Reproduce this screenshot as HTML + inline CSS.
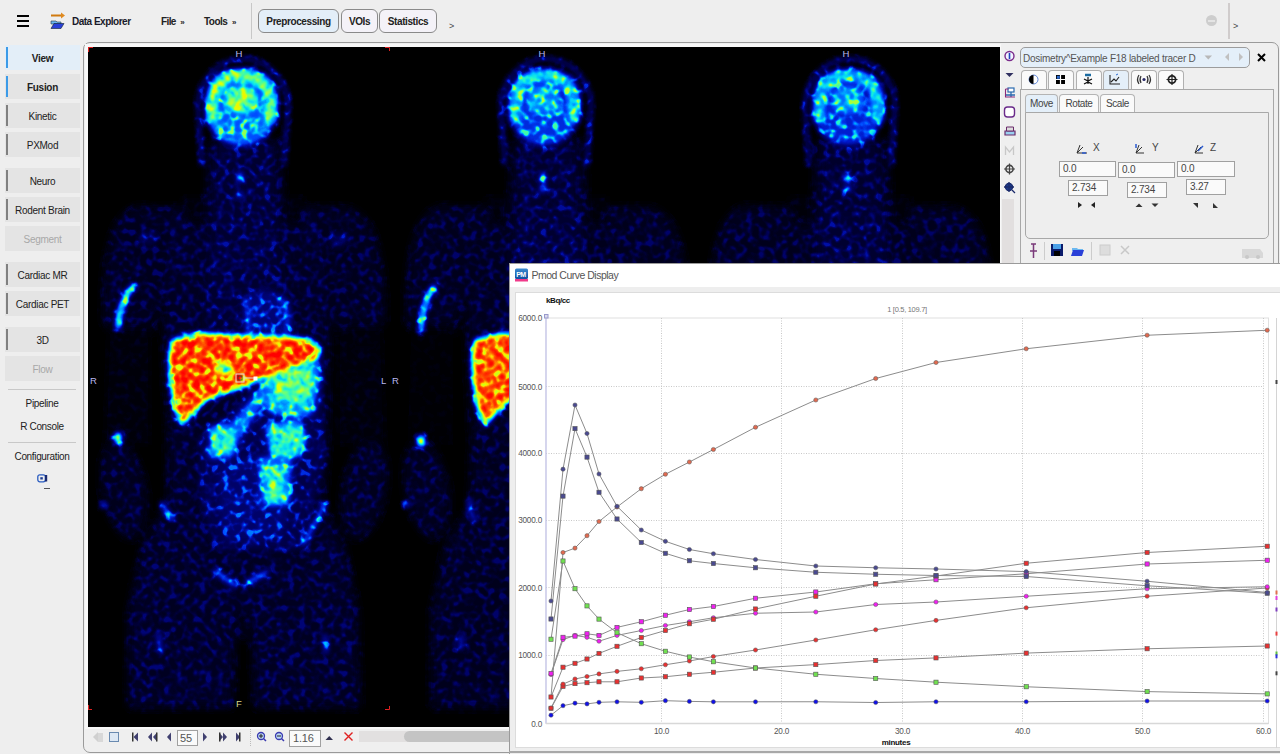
<!DOCTYPE html>
<html><head><meta charset="utf-8">
<style>
*{box-sizing:border-box;margin:0;padding:0}
html,body{width:1280px;height:754px;overflow:hidden;background:#eeeeee;font-family:"Liberation Sans",sans-serif;color:#222;position:relative}
.a{position:absolute}
.t{position:absolute;white-space:nowrap;font-size:10px;letter-spacing:-0.35px;line-height:12px}
.b{font-weight:bold}
.sb{position:absolute;left:5px;width:75px;height:25px;background:#e4e4e4;text-align:center;font-size:10px;line-height:27px;letter-spacing:-0.3px;color:#222}
.sb:before{content:"";position:absolute;left:1px;top:2px;width:2px;height:21px;background:#808080}
.sb.blue:before{background:#3c9be8}
.sb.dis{color:#a8a8a8}
.sb.dis:before{display:none}
.tbtn{position:absolute;top:9px;height:24px;border:1px solid #8a8a8a;border-radius:6px;background:#f4f2f8;font-weight:bold;font-size:10px;letter-spacing:-0.4px;text-align:center;line-height:24px;color:#222}
.tab{position:absolute;top:70px;width:26px;height:19px;border:1px solid #b0b0b0;border-bottom:none;border-radius:4px 4px 0 0;background:#fafafa}
.stab{position:absolute;top:94px;height:19px;border:1px solid #b4b4b4;border-bottom:none;border-radius:4px 4px 0 0;background:#fafafa;font-size:10px;letter-spacing:-0.4px;line-height:18px;text-align:center;color:#444}
.fld{position:absolute;height:16px;border:1px solid #a0a0a0;background:#fafafa;font-size:10px;line-height:14px;padding-left:3px;color:#444;letter-spacing:-0.2px}
</style></head><body>
<!-- toolbar -->
<div class="a" style="left:17px;top:15px;width:12px;height:2px;background:#000"></div>
<div class="a" style="left:17px;top:20px;width:12px;height:2px;background:#000"></div>
<div class="a" style="left:17px;top:25px;width:12px;height:2px;background:#000"></div>
<svg class="a" style="left:50px;top:12px" width="16" height="18" viewBox="0 0 16 18">
<path d="M1 3.5h11" stroke="#d07a10" stroke-width="2"/><path d="M11 0.5l4 3l-4 3z" fill="#e08a20"/>
<path d="M1 9h5l1 1h4v2H1z" fill="#6cb8f0" stroke="#234" stroke-width="0.6"/>
<path d="M1 16.5l3-5h10l-3 5z" fill="#2a40d8" stroke="#123" stroke-width="0.6"/>
</svg>
<div class="t b" style="left:72px;top:16px;letter-spacing:-0.5px;color:#1a1a2a">Data Explorer</div>
<div class="t b" style="left:161px;top:16px;letter-spacing:-0.6px">File &nbsp;<span style="font-size:8px">»</span></div>
<div class="t b" style="left:204px;top:16px;letter-spacing:-0.5px">Tools &nbsp;<span style="font-size:8px">»</span></div>
<div class="a" style="left:251px;top:3px;width:1px;height:36px;background:#c8c8c8"></div>
<div class="tbtn" style="left:258px;width:81px;background:#e3eef8">Preprocessing</div>
<div class="tbtn" style="left:341px;width:37px">VOIs</div>
<div class="tbtn" style="left:379px;width:58px">Statistics</div>
<div class="t" style="left:449px;top:20px;font-size:9px;color:#444">&gt;</div>
<div class="a" style="left:1206px;top:15px;width:11px;height:11px;border-radius:50%;background:#cdcdcd"></div>
<div class="a" style="left:1208px;top:20px;width:7px;height:1.5px;background:#e4e4e4"></div>
<div class="a" style="left:1228px;top:3px;width:2px;height:36px;background:#d0cccc"></div>
<div class="t" style="left:1233px;top:20px;font-size:9px;color:#444">&gt;</div>

<!-- sidebar -->
<div class="sb blue b" style="top:45px;background:#e3eef8">View</div>
<div class="sb blue b" style="top:74px">Fusion</div>
<div class="sb" style="top:103px">Kinetic</div>
<div class="sb" style="top:132px">PXMod</div>
<div class="sb" style="top:168px">Neuro</div>
<div class="sb" style="top:197px">Rodent Brain</div>
<div class="sb dis" style="top:226px">Segment</div>
<div class="sb" style="top:262px">Cardiac MR</div>
<div class="sb" style="top:291px">Cardiac PET</div>
<div class="sb" style="top:327px">3D</div>
<div class="sb dis" style="top:356px">Flow</div>
<div class="a" style="left:8px;top:389px;width:68px;height:1px;background:#c8c8c8"></div>
<div class="t" style="left:0;width:84px;text-align:center;top:398px">Pipeline</div>
<div class="t" style="left:0;width:84px;text-align:center;top:421px">R Console</div>
<div class="a" style="left:8px;top:442px;width:68px;height:1px;background:#c8c8c8"></div>
<div class="t" style="left:0;width:84px;text-align:center;top:451px">Configuration</div>
<svg class="a" style="left:37px;top:474px" width="14" height="18" viewBox="0 0 14 18">
<rect x="0.8" y="0.8" width="7.5" height="7" rx="2" fill="none" stroke="#2a5cc0" stroke-width="1.3"/>
<rect x="3.3" y="3.2" width="2.5" height="2.3" fill="#1a3a90"/>
<rect x="8" y="1" width="2.2" height="6.5" fill="#1a2a70"/>
<rect x="7" y="14" width="6" height="1" fill="#555"/>
</svg>
<!-- main panel -->
<div class="a" style="left:83px;top:42px;width:1196px;height:711px;border:1px solid #9a9a9a;border-radius:7px;background:#efefef"></div>
<div class="a" style="left:85px;top:44px;width:916px;height:685px;background:#f8f8f8"></div>
<div class="a" style="left:88px;top:47px;width:912px;height:680px;background:#000"></div>
<!-- right icon column -->
<svg class="a" style="left:1000px;top:47px" width="20" height="160" viewBox="0 0 20 160">
<ellipse cx="9.5" cy="9" rx="4.5" ry="4.5" fill="#f4f4ff" stroke="#7a2a8a" stroke-width="1.4"/>
<rect x="8.7" y="6" width="1.6" height="6" fill="#2040c0"/>
<path d="M5.5 26h8l-4 4z" fill="#303060"/>
<rect x="8" y="41" width="6" height="4" fill="#fff" stroke="#2a6ab0" stroke-width="1.2"/>
<path d="M11 45v3M6 48h9M11 48v2" stroke="#2a6ab0" stroke-width="1.3" fill="none"/>
<path d="M5.5 42h3M5.5 42v8M5 50h10" stroke="#8a2a7a" stroke-width="1.1" fill="none"/>
<rect x="4.5" y="60" width="10" height="10" rx="3" fill="#fff" stroke="#6a2a8a" stroke-width="1.4"/>
<path d="M5 84h10v4H5z" fill="#9ad0f0" stroke="#6a2a6a" stroke-width="1.2"/><path d="M6.5 80h7v4h-7z" fill="#ddd" stroke="#6a2a6a" stroke-width="1"/>
<path d="M5.5 108v-8l4 5l4-5v8" stroke="#c8c8c8" stroke-width="1.3" fill="none"/>
<circle cx="9.5" cy="122" r="3.6" fill="none" stroke="#444" stroke-width="1.6"/><path d="M9.5 116.5v11M4 122h11" stroke="#444" stroke-width="1.2"/>
<circle cx="9" cy="140" r="3.6" fill="#1a3a8a" stroke="#1a2a6a" stroke-width="1.2"/><path d="M9 135v10M4 140h10M12 143l3 3" stroke="#1a2a6a" stroke-width="1.3"/>
</svg>
<div class="a" style="left:1002px;top:199px;width:12px;height:64px;background:#e2dfdf"></div>
<div class="a" style="left:1020px;top:89px;width:1px;height:174px;background:#a8a8a8"></div>
<div class="a" style="left:1273px;top:89px;width:1px;height:174px;background:#a8a8a8"></div>
<div class="a" style="left:1020px;top:89px;width:254px;height:1px;background:#a8a8a8"></div>
<!-- dropdown -->
<div class="a" style="left:1020px;top:47px;width:230px;height:21px;border:1px solid #9c9c9c;border-radius:5px;background:#e4eff9"></div>
<div class="t" style="left:1023px;top:53px;color:#555;letter-spacing:-0.25px;width:174px;overflow:hidden">Dosimetry^Example F18 labeled tracer D</div>
<svg class="a" style="left:1200px;top:50px" width="50" height="14" viewBox="0 0 50 14">
<path d="M4.5 5.5h7.5l-3.75 4z" fill="#b8b8b8"/>
<path d="M29 3v8l-4-4z" fill="#c0c0c0"/>
<path d="M39 3v8l4-4z" fill="#c0c0c0"/>
</svg>
<svg class="a" style="left:1256px;top:52px" width="11" height="11" viewBox="0 0 11 11"><path d="M2 2l7 7M9 2l-7 7" stroke="#000" stroke-width="2"/></svg>
<!-- icon tabs -->
<div class="tab" style="left:1021px"></div>
<div class="tab" style="left:1048px"></div>
<div class="tab" style="left:1076px"></div>
<div class="tab" style="left:1103px;background:#e4eff9"></div>
<div class="tab" style="left:1131px"></div>
<div class="tab" style="left:1158px"></div>
<svg class="a" style="left:1021px;top:70px" width="170" height="19" viewBox="0 0 170 19">
<circle cx="12.5" cy="9.5" r="4.5" fill="#fff" stroke="#3a6ad0" stroke-width="0.8"/><path d="M12.5 5a4.5 4.5 0 0 0 0 9z" fill="#000"/>
<rect x="35" y="5" width="9" height="9" fill="#000"/><path d="M39.5 5v9M35 9.5h9" stroke="#fff" stroke-width="1.2"/><rect x="35.8" y="5.8" width="3" height="3" fill="#2a6ad0"/>
<path d="M64 5h6" stroke="#1a6aa0" stroke-width="2.5"/><path d="M67 7v7M63 9l4 2l4-2M63 14l4-2l4 2" stroke="#111" stroke-width="1.2" fill="none"/>
<path d="M89 5v9h10M90 12l3-3l2 2l3-4" stroke="#222" stroke-width="1.1" fill="none"/><path d="M95 5l2-1" stroke="#2a6ad0" stroke-width="1"/>
<path d="M120 6q-2 3.5 0 7M126 6q2 3.5 0 7M118 5q-3 4.5 0 9M128 5q3 4.5 0 9" stroke="#333" stroke-width="1.2" fill="none"/><circle cx="123" cy="9.5" r="1.6" fill="#2a2a6a"/>
<circle cx="151" cy="9.5" r="3.6" fill="none" stroke="#222" stroke-width="1.8"/><path d="M151 4v11M145.5 9.5h11" stroke="#222" stroke-width="1.2"/>
</svg>
<!-- sub tabs -->
<div class="stab" style="left:1025px;width:33px;background:#e4eff9">Move</div>
<div class="stab" style="left:1059px;width:40px">Rotate</div>
<div class="stab" style="left:1100px;width:35px">Scale</div>
<div class="a" style="left:1025px;top:112px;width:244px;height:127px;border:1px solid #a8a8a8;border-radius:0 0 5px 5px;background:#eeeeee"></div>
<!-- xyz -->
<svg class="a" style="left:1076px;top:141px" width="150" height="72" viewBox="0 0 150 72">
<path d="M4 4l-3 8h10M1 12l6-6" stroke="#333" stroke-width="1" fill="none"/><path d="M6 12h4" stroke="#2a5ad0" stroke-width="1.5"/>
<path d="M63 4l-3 8h8M60 12l6-6" stroke="#333" stroke-width="1" fill="none"/><path d="M60 3v4" stroke="#2a5ad0" stroke-width="1.5"/>
<path d="M122 4l-3 8h8M119 12l6-6" stroke="#333" stroke-width="1" fill="none"/><path d="M122 10l5-5" stroke="#2a5ad0" stroke-width="1.5"/>
<path d="M2 61v6l4-3z" fill="#222"/><path d="M19 61v6l-4-3z" fill="#222"/>
<path d="M59.5 66h7l-3.5-3.5z" fill="#333"/><path d="M75.5 62.5h7l-3.5 3.5z" fill="#333"/>
<path d="M117 62h5v5zM117.5 62.5l4 4" fill="#333"/><path d="M137 62v5h5z" fill="#333"/>
</svg>
<div class="t" style="left:1093px;top:142px;color:#444">X</div>
<div class="t" style="left:1152px;top:142px;color:#444">Y</div>
<div class="t" style="left:1210px;top:142px;color:#444">Z</div>
<div class="fld" style="left:1059px;top:161px;width:57px">0.0</div>
<div class="fld" style="left:1118px;top:162px;width:57px">0.0</div>
<div class="fld" style="left:1177px;top:161px;width:58px">0.0</div>
<div class="fld" style="left:1068px;top:180px;width:40px">2.734</div>
<div class="fld" style="left:1127px;top:182px;width:40px">2.734</div>
<div class="fld" style="left:1186px;top:179px;width:40px">3.27</div>
<!-- bottom icons of right panel -->
<svg class="a" style="left:1024px;top:241px" width="250" height="20" viewBox="0 0 250 20">
<path d="M7 3h5M9.5 3v7M6 10h7M9.5 10v7" stroke="#7a3a7a" stroke-width="1.5"/>
<rect x="20" y="1" width="1" height="18" fill="#ccc"/>
<rect x="27" y="3" width="12" height="12" fill="#0a1a6a"/><rect x="29" y="3" width="8" height="5" fill="#4aa0e8"/><rect x="30" y="10" width="6" height="5" fill="#000"/>
<path d="M48 7h5l1 1h5v2H48z" fill="#6cb8f0"/><path d="M47 15l2-6h11l-2 6z" fill="#2a40d8"/>
<rect x="67" y="1" width="1" height="18" fill="#ccc"/>
<rect x="76" y="4" width="10" height="10" fill="#ddd" stroke="#ccc"/>
<path d="M97 5l8 8M105 5l-8 8" stroke="#c8c8c8" stroke-width="1.5"/>
<path d="M218 8h18l3 4v5h-21z" fill="#d8d8d8"/><circle cx="223" cy="16" r="2" fill="#c8c8c8"/><circle cx="234" cy="16" r="2" fill="#c8c8c8"/>
</svg>
<!-- bottom toolbar -->
<svg class="a" style="left:88px;top:728px" width="425" height="20" viewBox="0 0 425 20">
<path d="M5 9l5-5v10z" fill="#d0d0d0"/><rect x="10" y="5" width="5" height="9" fill="#d8d8d8"/>
<rect x="21.5" y="4.5" width="9" height="9" fill="#dde8f4" stroke="#6a8ab0"/>
<rect x="44" y="4.5" width="1.5" height="9" fill="#333"/><path d="M50 4.5v9l-4.5-4.5z" fill="#404070"/>
<path d="M64 4.5v9l-4-4.5zM69 4.5v9l-4-4.5z" fill="#404070"/><rect x="68" y="4.5" width="1.5" height="9" fill="#333"/>
<path d="M83 4.5v9l-4-4.5z" fill="#404070"/>
<path d="M115 4.5v9l4-4.5z" fill="#404070"/>
<path d="M131 4.5v9l4-4.5zM135 4.5v9l4-4.5z" fill="#404070"/><rect x="131" y="4.5" width="1.5" height="9" fill="#333"/>
<path d="M148 4.5v9l4-4.5z" fill="#404070"/><rect x="151" y="4.5" width="1.5" height="9" fill="#333"/>
<path d="M162.5 1v18" stroke="#bbb" stroke-dasharray="1 1"/>
<circle cx="173" cy="8" r="3.5" fill="#bcd8f4" stroke="#3a3ab0" stroke-width="1.3"/><path d="M171 8h4M173 6v4" stroke="#222" stroke-width="1"/><path d="M175.5 10.5l2.5 2.5" stroke="#3a3ab0" stroke-width="1.5"/>
<circle cx="191" cy="8" r="3.5" fill="#bcd8f4" stroke="#3a3ab0" stroke-width="1.3"/><path d="M189 8h4" stroke="#222" stroke-width="1"/><path d="M193.5 10.5l2.5 2.5" stroke="#3a3ab0" stroke-width="1.5"/>
<path d="M237.5 12h7.5l-3.75-4z" fill="#303050"/>
<path d="M256.5 4.5l8 8M264.5 4.5l-8 8" stroke="#e02020" stroke-width="1.4"/>
</svg>
<div class="fld" style="left:177px;top:730px;width:21px;height:16px;font-size:11px;color:#555;padding-left:2px">55</div>
<div class="fld" style="left:289px;top:730px;width:32px;height:17px;font-size:11px;color:#555;padding-left:3px">1.16</div>
<div class="a" style="left:359px;top:731px;width:150px;height:11px;background:#e2e0e0"></div>
<div class="a" style="left:404px;top:731px;width:105px;height:11px;background:#c4c4c4;border-radius:6px 0 0 6px"></div>
<svg class="a" style="left:88px;top:47px" width="912" height="680" viewBox="88 47 912 680">
<defs><filter id="soft" x="-20%" y="-20%" width="140%" height="140%" color-interpolation-filters="sRGB"><feGaussianBlur stdDeviation="3.5"/></filter>
<filter id="soft2" x="-20%" y="-20%" width="140%" height="140%" color-interpolation-filters="sRGB"><feGaussianBlur stdDeviation="2"/></filter>
<filter id="pet" x="88" y="47" width="912" height="680" filterUnits="userSpaceOnUse" color-interpolation-filters="sRGB">
<feGaussianBlur in="SourceGraphic" stdDeviation="2.5" result="bl"/>
<feComponentTransfer in="bl" result="amp"><feFuncR type="table" tableValues="0 0.14 0.19 0.23 0.26 0.28 0.28 0.26 0.22 0.18 0.15 0.13 0.12 0.11 0.08 0.06 0.05 0.05 0.05 0.05 0.05"/><feFuncG type="table" tableValues="0 0.14 0.19 0.23 0.26 0.28 0.28 0.26 0.22 0.18 0.15 0.13 0.12 0.11 0.08 0.06 0.05 0.05 0.05 0.05 0.05"/><feFuncB type="table" tableValues="0 0.14 0.19 0.23 0.26 0.28 0.28 0.26 0.22 0.18 0.15 0.13 0.12 0.11 0.08 0.06 0.05 0.05 0.05 0.05 0.05"/><feFuncA type="linear" slope="0" intercept="1"/></feComponentTransfer>
<feComponentTransfer in="bl" result="ampB"><feFuncR type="table" tableValues="0 0 0 0 0 0 0.02 0.04 0.06 0.08 0.1 0.12 0.14 0.16 0.18 0.2 0.22 0.22 0.22 0.22 0.22"/><feFuncG type="table" tableValues="0 0 0 0 0 0 0.02 0.04 0.06 0.08 0.1 0.12 0.14 0.16 0.18 0.2 0.22 0.22 0.22 0.22 0.22"/><feFuncB type="table" tableValues="0 0 0 0 0 0 0.02 0.04 0.06 0.08 0.1 0.12 0.14 0.16 0.18 0.2 0.22 0.22 0.22 0.22 0.22"/><feFuncA type="linear" slope="0" intercept="1"/></feComponentTransfer>
<feTurbulence type="fractalNoise" baseFrequency="0.17" numOctaves="2" seed="7" result="nz0"/>
<feGaussianBlur in="nz0" stdDeviation="1" result="nz"/>
<feColorMatrix in="nz" type="matrix" values="3.2 0 0 0 -1.1  3.2 0 0 0 -1.1  3.2 0 0 0 -1.1  0 0 0 0 1" result="gn1"/>
<feComponentTransfer in="gn1" result="gn"><feFuncR type="gamma" amplitude="1" exponent="3" offset="0"/><feFuncG type="gamma" amplitude="1" exponent="3" offset="0"/><feFuncB type="gamma" amplitude="1" exponent="3" offset="0"/><feFuncA type="linear" slope="0" intercept="1"/></feComponentTransfer>
<feComponentTransfer in="gn1" result="inv"><feFuncR type="linear" slope="-1" intercept="1"/><feFuncG type="linear" slope="-1" intercept="1"/><feFuncB type="linear" slope="-1" intercept="1"/><feFuncA type="linear" slope="0" intercept="1"/></feComponentTransfer>
<feComponentTransfer in="inv" result="gm"><feFuncR type="gamma" amplitude="1" exponent="3" offset="0"/><feFuncG type="gamma" amplitude="1" exponent="3" offset="0"/><feFuncB type="gamma" amplitude="1" exponent="3" offset="0"/><feFuncA type="linear" slope="0" intercept="1"/></feComponentTransfer>
<feComposite in="amp" in2="gn" operator="arithmetic" k1="1" k2="0" k3="0" k4="0" result="P"/>
<feComposite in="ampB" in2="gm" operator="arithmetic" k1="1" k2="0" k3="0" k4="0" result="P2"/>
<feComposite in="bl" in2="P" operator="arithmetic" k1="0" k2="0.9" k3="1" k4="0" result="Q"/>
<feComponentTransfer in="Q" result="Qi"><feFuncR type="linear" slope="-1" intercept="1"/><feFuncG type="linear" slope="-1" intercept="1"/><feFuncB type="linear" slope="-1" intercept="1"/><feFuncA type="linear" slope="0" intercept="1"/></feComponentTransfer>
<feComposite in="Qi" in2="P2" operator="arithmetic" k1="0" k2="1" k3="1" k4="0" result="S"/>
<feComponentTransfer in="S" result="md"><feFuncR type="linear" slope="-1" intercept="1"/><feFuncG type="linear" slope="-1" intercept="1"/><feFuncB type="linear" slope="-1" intercept="1"/><feFuncA type="linear" slope="0" intercept="1"/></feComponentTransfer>
<feComponentTransfer in="md"><feFuncR type="table" tableValues="0 0 0 0 0 0 0 0.1 0.35 0.65 0.9 1 1 1 1 1 1"/><feFuncG type="table" tableValues="0 0 0.02 0.1 0.3 0.55 0.8 0.95 1 1 1 0.85 0.55 0.25 0 0 0"/><feFuncB type="table" tableValues="0 0.3 0.5 0.8 1 1 1 0.85 0.55 0.25 0 0 0 0 0 0 0"/><feFuncA type="linear" slope="0" intercept="1"/></feComponentTransfer>
</filter></defs>
<g filter="url(#pet)"><rect x="88" y="47" width="912" height="680" fill="#000"/>
<g filter="url(#soft)">
<polygon points="208,140 281,140 284,212 206,212" fill="rgb(8,8,8)"/>
<polygon points="150,207 335,207 330,300 328,440 324,505 345,545 358,611 360,708 128,708 128,611 142,545 166,505 168,440 162,300" fill="rgb(8,8,8)"/>
<path d="M103 320 Q101 209 140 206 L172 208 L160 300 L152 335 L110 340 Z" fill="rgb(7,7,7)"/>
<path d="M316 208 L345 207 Q386 211 385 320 L378 340 L336 335 L330 300 Z" fill="rgb(7,7,7)"/>
<polygon points="108,325 150,325 150,445 104,445" fill="rgb(2,2,2)"/>
<polygon points="338,325 382,325 386,445 338,445" fill="rgb(2,2,2)"/>
<ellipse cx="124" cy="490" rx="22" ry="50" transform="rotate(-10 124 490)" fill="rgb(7,7,7)"/>
<ellipse cx="364" cy="490" rx="22" ry="50" transform="rotate(10 364 490)" fill="rgb(7,7,7)"/>
<polygon points="180,196 206,196 206,222 190,226" fill="rgb(2,2,2)"/>
<polygon points="284,196 306,196 300,226 284,222" fill="rgb(2,2,2)"/>
<polygon points="235,640 252,640 254,708 233,708" fill="rgb(0,0,0)"/>
<polygon points="236,615 250,615 252,640 235,640" fill="rgb(4,4,4)"/>
<polygon points="212,205 278,205 285,330 205,330" fill="rgb(11,11,11)"/>
<polygon points="215,140 272,140 276,212 212,212" fill="rgb(11,11,11)"/>
</g>
<path d="M202 165 L198 106 A45 47 0 0 1 288 106 L284 165" fill="none" stroke="rgb(43,43,43)" stroke-width="2.5"/>
<path d="M206 100 Q206 69 241 69 Q277 69 278 100 Q279 118 268 134 Q256 146 241 146 Q226 146 214 134 Q204 118 206 100Z" fill="rgb(76,76,76)"/>
<path d="M212 122 Q208 75 241 75 Q274 75 271 122" fill="none" stroke="rgb(153,153,153)" stroke-width="10"/>
<ellipse cx="241" cy="100" rx="17" ry="13" fill="rgb(145,145,145)"/>
<ellipse cx="260" cy="97" rx="4" ry="9" fill="rgb(61,61,61)"/>
<ellipse cx="222" cy="100" rx="3" ry="6" fill="rgb(65,65,65)"/>
<ellipse cx="240" cy="177" rx="3" ry="5" fill="rgb(90,90,90)"/>
<ellipse cx="240" cy="195" rx="3" ry="3" fill="rgb(72,72,72)"/>
<ellipse cx="148" cy="238" rx="10" ry="8" fill="rgb(15,15,15)"/>
<ellipse cx="338" cy="240" rx="10" ry="8" fill="rgb(15,15,15)"/>
<polygon points="244,296 270,290 290,300 292,330 270,338 246,334" fill="rgb(31,31,31)"/>
<path d="M246 300 L248 334" stroke="rgb(60,60,60)" stroke-width="5" fill="none" stroke-linecap="round"/>
<path d="M280 298 Q292 312 286 334" stroke="rgb(60,60,60)" stroke-width="5" fill="none" stroke-linecap="round"/>
<path d="M133 287 Q120 300 118 327" stroke="rgb(204,204,204)" stroke-width="3.5" fill="none" stroke-linecap="round"/>
<ellipse cx="118" cy="438" rx="3" ry="5" fill="rgb(215,215,215)"/>
<ellipse cx="103.5" cy="505" rx="2" ry="2.5" fill="rgb(125,125,125)"/>
<g filter="url(#soft2)">
<polygon points="200,440 262,380 320,360 326,460 300,550 215,550 200,500" fill="rgb(17,17,17)"/>
<polygon points="266,365 300,360 318,362 320,380 312,415 290,418 268,412 260,392" fill="rgb(92,92,92)"/>
<polygon points="270,372 300,368 314,372 310,400 290,404 272,398" fill="rgb(140,140,140)"/>
<polygon points="262,386 272,392 230,452 212,460 206,452" fill="rgb(76,76,76)"/>
<polygon points="209,428 226,424 236,440 232,456 214,456" fill="rgb(122,122,122)"/>
<ellipse cx="218" cy="440" rx="5" ry="5" fill="rgb(140,140,140)"/>
<ellipse cx="228" cy="447" rx="5" ry="4" fill="rgb(140,140,140)"/>
<polygon points="266,425 300,422 306,440 300,456 272,456" fill="rgb(128,128,128)"/>
<polygon points="258,457 292,457 290,505 262,505" fill="rgb(76,76,76)"/>
<polygon points="264,470 282,466 286,500 268,504" fill="rgb(133,133,133)"/>
<polygon points="218,462 258,457 262,505 290,505 280,540 225,540 220,500" fill="rgb(28,28,28)"/>
<polygon points="240,352 262,352 262,374 244,378" fill="rgb(56,56,56)"/>
</g>
<polygon points="172,340 200,333 232,335 256,336 290,337 311,340 320,349 318,358 310,362 290,368 266,377 246,386 225,393 206,400 196,410 186,421 182,425 175,410 170,380 169,355" fill="rgb(237,237,237)"/>
<ellipse cx="224" cy="369" rx="9" ry="5" fill="rgb(107,107,107)"/>
<path d="M162 504 Q166 512 173 518" stroke="rgb(97,97,97)" stroke-width="3.5" fill="none" stroke-linecap="round"/>
<path d="M325 504 Q316 522 303 544" stroke="rgb(97,97,97)" stroke-width="3.5" fill="none" stroke-linecap="round"/>
<path d="M216 571 Q226 580 235 585" stroke="rgb(107,107,107)" stroke-width="3.5" fill="none" stroke-linecap="round"/>
<path d="M247 583 Q256 578 266 573" stroke="rgb(107,107,107)" stroke-width="3.5" fill="none" stroke-linecap="round"/>
<path d="M159 634 L160 650" stroke="rgb(76,76,76)" stroke-width="3" fill="none" stroke-linecap="round"/>
<path d="M325 636 L326 652" stroke="rgb(76,76,76)" stroke-width="3" fill="none" stroke-linecap="round"/>
<g filter="url(#soft)">
<polygon points="511,140 584,140 587,212 509,212" fill="rgb(7,7,7)"/>
<polygon points="453,207 638,207 633,300 631,440 627,505 648,545 661,611 663,708 431,708 431,611 445,545 469,505 471,440 465,300" fill="rgb(7,7,7)"/>
<path d="M406 320 Q404 209 443 206 L475 208 L463 300 L455 335 L413 340 Z" fill="rgb(7,7,7)"/>
<path d="M619 208 L648 207 Q689 211 688 320 L681 340 L639 335 L633 300 Z" fill="rgb(7,7,7)"/>
<polygon points="411,325 453,325 453,445 407,445" fill="rgb(1,1,1)"/>
<polygon points="641,325 685,325 689,445 641,445" fill="rgb(1,1,1)"/>
<ellipse cx="427" cy="490" rx="22" ry="50" transform="rotate(-10 427 490)" fill="rgb(7,7,7)"/>
<ellipse cx="667" cy="490" rx="22" ry="50" transform="rotate(10 667 490)" fill="rgb(7,7,7)"/>
<polygon points="483,196 509,196 509,222 493,226" fill="rgb(2,2,2)"/>
<polygon points="587,196 609,196 603,226 587,222" fill="rgb(2,2,2)"/>
<polygon points="538,640 555,640 557,708 536,708" fill="rgb(0,0,0)"/>
<polygon points="539,615 553,615 555,640 538,640" fill="rgb(4,4,4)"/>
<polygon points="515,205 581,205 588,330 508,330" fill="rgb(11,11,11)"/>
<polygon points="518,140 575,140 579,212 515,212" fill="rgb(10,10,10)"/>
</g>
<path d="M505 165 L501 106 A45 47 0 0 1 591 106 L587 165" fill="none" stroke="rgb(43,43,43)" stroke-width="2.5"/>
<path d="M509 100 Q509 69 544 69 Q580 69 581 100 Q582 118 571 134 Q559 146 544 146 Q529 146 517 134 Q507 118 509 100Z" fill="rgb(59,59,59)"/>
<path d="M515 122 Q511 75 544 75 Q577 75 574 122" fill="none" stroke="rgb(115,115,115)" stroke-width="10"/>
<ellipse cx="544" cy="100" rx="17" ry="13" fill="rgb(92,92,92)"/>
<ellipse cx="563" cy="97" rx="4" ry="9" fill="rgb(47,47,47)"/>
<ellipse cx="525" cy="100" rx="3" ry="6" fill="rgb(50,50,50)"/>
<ellipse cx="543" cy="178" rx="3" ry="5" fill="rgb(101,101,101)"/>
<ellipse cx="543" cy="189" rx="3" ry="3" fill="rgb(95,95,95)"/>
<path d="M434 287 Q423 300 421 330" stroke="rgb(178,178,178)" stroke-width="3.5" fill="none" stroke-linecap="round"/>
<ellipse cx="421" cy="441" rx="3" ry="5" fill="rgb(253,253,253)"/>
<ellipse cx="407" cy="504" rx="2" ry="2.5" fill="rgb(125,125,125)"/>
<polygon points="475,340 503,333 535,335 559,336 593,337 614,340 623,349 621,358 613,362 593,368 569,377 549,386 528,393 509,400 499,410 489,421 485,425 478,410 473,380 472,355" fill="rgb(232,232,232)"/>
<path d="M470 500 Q468 510 475 520" stroke="rgb(84,84,84)" stroke-width="3" fill="none" stroke-linecap="round"/>
<path d="M461 636 L461 648" stroke="rgb(72,72,72)" stroke-width="3" fill="none" stroke-linecap="round"/>
<g filter="url(#soft)">
<polygon points="815,140 888,140 891,212 813,212" fill="rgb(7,7,7)"/>
<polygon points="757,207 942,207 937,300 935,440 931,505 952,545 965,611 967,708 735,708 735,611 749,545 773,505 775,440 769,300" fill="rgb(7,7,7)"/>
<path d="M710 320 Q708 209 747 206 L779 208 L767 300 L759 335 L717 340 Z" fill="rgb(7,7,7)"/>
<path d="M923 208 L952 207 Q993 211 992 320 L985 340 L943 335 L937 300 Z" fill="rgb(7,7,7)"/>
<polygon points="715,325 757,325 757,445 711,445" fill="rgb(1,1,1)"/>
<polygon points="945,325 989,325 993,445 945,445" fill="rgb(1,1,1)"/>
<ellipse cx="731" cy="490" rx="22" ry="50" transform="rotate(-10 731 490)" fill="rgb(6,6,6)"/>
<ellipse cx="971" cy="490" rx="22" ry="50" transform="rotate(10 971 490)" fill="rgb(6,6,6)"/>
<polygon points="787,196 813,196 813,222 797,226" fill="rgb(2,2,2)"/>
<polygon points="891,196 913,196 907,226 891,222" fill="rgb(2,2,2)"/>
<polygon points="842,640 859,640 861,708 840,708" fill="rgb(0,0,0)"/>
<polygon points="843,615 857,615 859,640 842,640" fill="rgb(4,4,4)"/>
<polygon points="819,205 885,205 892,330 812,330" fill="rgb(11,11,11)"/>
<polygon points="822,140 879,140 883,212 819,212" fill="rgb(10,10,10)"/>
</g>
<path d="M809 165 L805 106 A45 47 0 0 1 895 106 L891 165" fill="none" stroke="rgb(43,43,43)" stroke-width="2.5"/>
<path d="M813 100 Q813 69 848 69 Q884 69 885 100 Q886 118 875 134 Q863 146 848 146 Q833 146 821 134 Q811 118 813 100Z" fill="rgb(54,54,54)"/>
<path d="M819 122 Q815 75 848 75 Q881 75 878 122" fill="none" stroke="rgb(105,105,105)" stroke-width="10"/>
<ellipse cx="848" cy="100" rx="17" ry="13" fill="rgb(84,84,84)"/>
<ellipse cx="867" cy="97" rx="4" ry="9" fill="rgb(43,43,43)"/>
<ellipse cx="829" cy="100" rx="3" ry="6" fill="rgb(46,46,46)"/>
<ellipse cx="847" cy="178" rx="3" ry="5" fill="rgb(95,95,95)"/>
<ellipse cx="847" cy="189" rx="3" ry="3" fill="rgb(90,90,90)"/>
</g>
<text x="239" y="57" text-anchor="middle" font-family="Liberation Sans" font-size="9.5" fill="#b8b8f0">H</text>
<text x="542" y="57" text-anchor="middle" font-family="Liberation Sans" font-size="9.5" fill="#b8b8f0">H</text>
<text x="846" y="57" text-anchor="middle" font-family="Liberation Sans" font-size="9.5" fill="#b8b8f0">H</text>
<text x="239" y="707" text-anchor="middle" font-family="Liberation Sans" font-size="9.5" fill="#d8d890">F</text>
<text x="90" y="384" font-family="Liberation Sans" font-size="9.5" fill="#b8b8f0">R</text>
<text x="381" y="384" font-family="Liberation Sans" font-size="9.5" fill="#b8b8f0">L</text>
<text x="392" y="384" font-family="Liberation Sans" font-size="9.5" fill="#b8b8f0">R</text>
<path d="M88.5 52V47.5H93" stroke="#e02020" stroke-width="1.2" fill="none"/>
<path d="M385 47.5H389.5V51" stroke="#e02020" stroke-width="1" fill="none"/>
<path d="M88.5 705V709.5H92" stroke="#e02020" stroke-width="1.2" fill="none"/>
<path d="M385 709.5H389.5V706" stroke="#e02020" stroke-width="1" fill="none"/>
<rect x="236" y="374" width="8" height="8" fill="none" stroke="#ddd" stroke-width="1"/><rect x="238" y="376" width="4" height="4" fill="none" stroke="#333" stroke-width="0.8"/><path d="M244 378h10" stroke="#ddd"/><rect x="253.5" y="376.5" width="4" height="4" fill="#fff"/>
</svg>
<svg class="a" style="left:509px;top:263px" width="771" height="491" viewBox="509 263 771 491">
<rect x="509" y="263" width="771" height="491" fill="#eeeeee"/>
<rect x="509" y="263" width="771" height="24" fill="#ffffff"/>
<rect x="509" y="263" width="771" height="1" fill="#9a9a9a"/>
<rect x="509" y="263" width="1" height="491" fill="#9a9a9a"/>
<rect x="509" y="751" width="771" height="2" fill="#a8a8a8"/>
<rect x="515.5" y="292.5" width="770" height="455" fill="#ffffff" stroke="#dcdcdc"/>
<defs><linearGradient id="pmg" x1="0" y1="0" x2="0" y2="1"><stop offset="0" stop-color="#3a8ad0"/><stop offset="1" stop-color="#1050a0"/></linearGradient></defs>
<rect x="515" y="268.5" width="13" height="10.5" rx="1.5" fill="url(#pmg)"/><rect x="515" y="279" width="13" height="2.5" fill="#f03a8a"/>
<text x="516.2" y="276.5" font-family="Liberation Sans" font-size="7" font-weight="bold" fill="#fff" letter-spacing="-0.6">PM</text>
<text x="531.5" y="279" font-family="Liberation Sans" font-size="10.5" fill="#555" letter-spacing="-0.5">Pmod Curve Display</text>
<rect x="546" y="318" width="722.5" height="405.5" fill="#fff" stroke="#e0e0e0" stroke-width="1"/>
<line x1="661.5" y1="318" x2="661.5" y2="723.5" stroke="#c8c8c8" stroke-width="1" stroke-dasharray="1 1.5"/>
<line x1="781.5" y1="318" x2="781.5" y2="723.5" stroke="#c8c8c8" stroke-width="1" stroke-dasharray="1 1.5"/>
<line x1="902.5" y1="318" x2="902.5" y2="723.5" stroke="#c8c8c8" stroke-width="1" stroke-dasharray="1 1.5"/>
<line x1="1022.5" y1="318" x2="1022.5" y2="723.5" stroke="#c8c8c8" stroke-width="1" stroke-dasharray="1 1.5"/>
<line x1="1142.5" y1="318" x2="1142.5" y2="723.5" stroke="#c8c8c8" stroke-width="1" stroke-dasharray="1 1.5"/>
<line x1="1263.5" y1="318" x2="1263.5" y2="723.5" stroke="#c8c8c8" stroke-width="1" stroke-dasharray="1 1.5"/>
<line x1="546" y1="655.5" x2="1262.5" y2="655.5" stroke="#c8c8c8" stroke-width="1" stroke-dasharray="1 1.5"/>
<line x1="546" y1="587.5" x2="1262.5" y2="587.5" stroke="#c8c8c8" stroke-width="1" stroke-dasharray="1 1.5"/>
<line x1="546" y1="520.5" x2="1262.5" y2="520.5" stroke="#c8c8c8" stroke-width="1" stroke-dasharray="1 1.5"/>
<line x1="546" y1="453.5" x2="1262.5" y2="453.5" stroke="#c8c8c8" stroke-width="1" stroke-dasharray="1 1.5"/>
<line x1="546" y1="386.5" x2="1262.5" y2="386.5" stroke="#c8c8c8" stroke-width="1" stroke-dasharray="1 1.5"/>
<line x1="546" y1="318" x2="546" y2="723.5" stroke="#c4c4ec" stroke-width="1.2"/>
<line x1="546" y1="723.5" x2="1268.5" y2="723.5" stroke="#d8d8d8" stroke-width="1.5"/>
<rect x="544.5" y="314.5" width="3.5" height="3.5" fill="#dde" stroke="#99c"/>
<text x="542" y="726.5" text-anchor="end" font-family="Liberation Sans" font-size="8.2" fill="#555" letter-spacing="-0.2">0.0</text>
<text x="542" y="658.3" text-anchor="end" font-family="Liberation Sans" font-size="8.2" fill="#555" letter-spacing="-0.2">1000.0</text>
<text x="542" y="590.7" text-anchor="end" font-family="Liberation Sans" font-size="8.2" fill="#555" letter-spacing="-0.2">2000.0</text>
<text x="542" y="523.1" text-anchor="end" font-family="Liberation Sans" font-size="8.2" fill="#555" letter-spacing="-0.2">3000.0</text>
<text x="542" y="456.3" text-anchor="end" font-family="Liberation Sans" font-size="8.2" fill="#555" letter-spacing="-0.2">4000.0</text>
<text x="542" y="389.5" text-anchor="end" font-family="Liberation Sans" font-size="8.2" fill="#555" letter-spacing="-0.2">5000.0</text>
<text x="542" y="321" text-anchor="end" font-family="Liberation Sans" font-size="8.2" fill="#555" letter-spacing="-0.2">6000.0</text>
<text x="661.5" y="734" text-anchor="middle" font-family="Liberation Sans" font-size="8.2" fill="#555" letter-spacing="-0.2">10.0</text>
<text x="781.5" y="734" text-anchor="middle" font-family="Liberation Sans" font-size="8.2" fill="#555" letter-spacing="-0.2">20.0</text>
<text x="902.5" y="734" text-anchor="middle" font-family="Liberation Sans" font-size="8.2" fill="#555" letter-spacing="-0.2">30.0</text>
<text x="1022.5" y="734" text-anchor="middle" font-family="Liberation Sans" font-size="8.2" fill="#555" letter-spacing="-0.2">40.0</text>
<text x="1142.5" y="734" text-anchor="middle" font-family="Liberation Sans" font-size="8.2" fill="#555" letter-spacing="-0.2">50.0</text>
<text x="1263.5" y="734" text-anchor="middle" font-family="Liberation Sans" font-size="8.2" fill="#555" letter-spacing="-0.2">60.0</text>
<text x="896" y="745" text-anchor="middle" font-family="Liberation Sans" font-size="8" font-weight="bold" fill="#111" letter-spacing="-0.3">minutes</text>
<text x="546" y="303" font-family="Liberation Sans" font-size="8" font-weight="bold" fill="#111" letter-spacing="-0.4">kBq/cc</text>
<text x="907" y="312" text-anchor="middle" font-family="Liberation Sans" font-size="7.5" fill="#777" letter-spacing="-0.3">1 [0.5, 109.7]</text>
<line x1="1276.5" y1="318" x2="1276.5" y2="748" stroke="#d4d4d4" stroke-width="1"/>
<rect x="1275.5" y="590.5" width="2" height="4" fill="#e07050"/>
<rect x="1275.5" y="596" width="2" height="4" fill="#e040e0"/>
<rect x="1275.5" y="607.5" width="2" height="4" fill="#8040c0"/>
<rect x="1275.5" y="631.6" width="2" height="4" fill="#e84040"/>
<rect x="1275.5" y="651.5" width="2" height="4" fill="#60c040"/>
<rect x="1275.5" y="654.3" width="2" height="4" fill="#3030e0"/>
<rect x="1275.5" y="671.3" width="2" height="4" fill="#444"/>
<rect x="1275.5" y="380" width="2" height="4" fill="#444"/>
<polyline points="551,697 563,552.5 575,548.1 587,535.7 599,521.5 617,507 641.3,488.7 665.4,474.25 689.4,462 713.4,449.5 755.5,427.25 815.8,400 875.7,378.5 936,362.5 1026.2,348.75 1147.1,335.25 1267.2,330.25" fill="none" stroke="#8c8c8c" stroke-width="1"/>
<polyline points="551,715.2 563,705.7 575,703.2 587,703.9 599,702.3 617,701.8 641.3,702.3 665.4,700.7 689.4,701.4 713.4,701.8 755.5,701.8 815.8,701.75 875.7,702.5 936,701.75 1026.2,701.75 1147.1,701 1267.2,701" fill="none" stroke="#8c8c8c" stroke-width="1"/>
<polyline points="551,708.3 563,686.4 575,683.6 587,682.7 599,681.8 617,681.8 641.3,678 665.4,676.75 689.4,674.25 713.4,672.25 755.5,668 815.8,664.6 875.7,660.5 936,657.9 1026.2,653.1 1147.1,648.75 1267.2,646" fill="none" stroke="#8c8c8c" stroke-width="1"/>
<polyline points="551,708 563,684.1 575,679 587,676.5 599,673.9 617,671.4 641.3,668.75 665.4,664.75 689.4,661 713.4,656.5 755.5,650 815.8,640 875.7,629.75 936,620.4 1026.2,607.75 1147.1,596.25 1267.2,588" fill="none" stroke="#8c8c8c" stroke-width="1"/>
<polyline points="551,674.6 563,639.6 575,635.4 587,637.3 599,641.2 617,635.4 641.3,630.5 665.4,625.5 689.4,621.75 713.4,617.75 755.5,613.25 815.8,612 875.7,604.5 936,602 1026.2,596.25 1147.1,588.75 1267.2,586.75" fill="none" stroke="#8c8c8c" stroke-width="1"/>
<polyline points="551,673.5 563,637.3 575,636.1 587,633.8 599,635.4 617,627.4 641.3,621.75 665.4,615.25 689.4,609.5 713.4,606.5 755.5,598.25 815.8,592 875.7,583.75 936,579.75 1026.2,573.75 1147.1,564 1267.2,560.25" fill="none" stroke="#8c8c8c" stroke-width="1"/>
<polyline points="551,697 563,667.2 575,663.3 587,659 599,653.4 617,646.3 641.3,637.5 665.4,630.5 689.4,623.75 713.4,619.25 755.5,609 815.8,596.25 875.7,584 936,576 1026.2,563.25 1147.1,552.5 1267.2,546.25" fill="none" stroke="#8c8c8c" stroke-width="1"/>
<polyline points="551,639.2 563,561 575,588.7 587,605.9 599,619.1 617,632.7 641.3,643.7 665.4,651.25 689.4,657 713.4,661.75 755.5,668 815.8,674.25 875.7,678.5 936,682.2 1026.2,686.75 1147.1,691.6 1267.2,693.9" fill="none" stroke="#8c8c8c" stroke-width="1"/>
<polyline points="551,619 563,496.1 575,428.6 587,457.1 599,492.3 617,519 641.3,542.5 665.4,553.3 689.4,560.75 713.4,563.5 755.5,567.75 815.8,572.25 875.7,574.25 936,575.5 1026.2,576.5 1147.1,585.75 1267.2,593.25" fill="none" stroke="#8c8c8c" stroke-width="1"/>
<polyline points="551,601 563,469.2 575,405 587,433.5 599,474 617,506.3 641.3,530 665.4,541.3 689.4,549.5 713.4,553.75 755.5,559.5 815.8,566 875.7,567.75 936,569 1026.2,571.6 1147.1,581.25 1267.2,592.5" fill="none" stroke="#8c8c8c" stroke-width="1"/>
<circle cx="563" cy="552.5" r="2.1" fill="#e06a50" stroke="#555" stroke-width="0.5"/>
<circle cx="575" cy="548.1" r="2.1" fill="#e06a50" stroke="#555" stroke-width="0.5"/>
<circle cx="587" cy="535.7" r="2.1" fill="#e06a50" stroke="#555" stroke-width="0.5"/>
<circle cx="599" cy="521.5" r="2.1" fill="#e06a50" stroke="#555" stroke-width="0.5"/>
<circle cx="617" cy="507" r="2.1" fill="#e06a50" stroke="#555" stroke-width="0.5"/>
<circle cx="641.3" cy="488.7" r="2.1" fill="#e06a50" stroke="#555" stroke-width="0.5"/>
<circle cx="665.4" cy="474.25" r="2.1" fill="#e06a50" stroke="#555" stroke-width="0.5"/>
<circle cx="689.4" cy="462" r="2.1" fill="#e06a50" stroke="#555" stroke-width="0.5"/>
<circle cx="713.4" cy="449.5" r="2.1" fill="#e06a50" stroke="#555" stroke-width="0.5"/>
<circle cx="755.5" cy="427.25" r="2.1" fill="#e06a50" stroke="#555" stroke-width="0.5"/>
<circle cx="815.8" cy="400" r="2.1" fill="#e06a50" stroke="#555" stroke-width="0.5"/>
<circle cx="875.7" cy="378.5" r="2.1" fill="#e06a50" stroke="#555" stroke-width="0.5"/>
<circle cx="936" cy="362.5" r="2.1" fill="#e06a50" stroke="#555" stroke-width="0.5"/>
<circle cx="1026.2" cy="348.75" r="2.1" fill="#e06a50" stroke="#555" stroke-width="0.5"/>
<circle cx="1147.1" cy="335.25" r="2.1" fill="#e06a50" stroke="#555" stroke-width="0.5"/>
<circle cx="1267.2" cy="330.25" r="2.1" fill="#e06a50" stroke="#555" stroke-width="0.5"/>
<circle cx="551" cy="715.2" r="2.1" fill="#1010e8" stroke="#555" stroke-width="0.5"/>
<circle cx="563" cy="705.7" r="2.1" fill="#1010e8" stroke="#555" stroke-width="0.5"/>
<circle cx="575" cy="703.2" r="2.1" fill="#1010e8" stroke="#555" stroke-width="0.5"/>
<circle cx="587" cy="703.9" r="2.1" fill="#1010e8" stroke="#555" stroke-width="0.5"/>
<circle cx="599" cy="702.3" r="2.1" fill="#1010e8" stroke="#555" stroke-width="0.5"/>
<circle cx="617" cy="701.8" r="2.1" fill="#1010e8" stroke="#555" stroke-width="0.5"/>
<circle cx="641.3" cy="702.3" r="2.1" fill="#1010e8" stroke="#555" stroke-width="0.5"/>
<circle cx="665.4" cy="700.7" r="2.1" fill="#1010e8" stroke="#555" stroke-width="0.5"/>
<circle cx="689.4" cy="701.4" r="2.1" fill="#1010e8" stroke="#555" stroke-width="0.5"/>
<circle cx="713.4" cy="701.8" r="2.1" fill="#1010e8" stroke="#555" stroke-width="0.5"/>
<circle cx="755.5" cy="701.8" r="2.1" fill="#1010e8" stroke="#555" stroke-width="0.5"/>
<circle cx="815.8" cy="701.75" r="2.1" fill="#1010e8" stroke="#555" stroke-width="0.5"/>
<circle cx="875.7" cy="702.5" r="2.1" fill="#1010e8" stroke="#555" stroke-width="0.5"/>
<circle cx="936" cy="701.75" r="2.1" fill="#1010e8" stroke="#555" stroke-width="0.5"/>
<circle cx="1026.2" cy="701.75" r="2.1" fill="#1010e8" stroke="#555" stroke-width="0.5"/>
<circle cx="1147.1" cy="701" r="2.1" fill="#1010e8" stroke="#555" stroke-width="0.5"/>
<circle cx="1267.2" cy="701" r="2.1" fill="#1010e8" stroke="#555" stroke-width="0.5"/>
<rect x="548.9" y="706.1999999999999" width="4.2" height="4.2" fill="#e83030" stroke="#555" stroke-width="0.6"/>
<rect x="560.9" y="684.3" width="4.2" height="4.2" fill="#e83030" stroke="#555" stroke-width="0.6"/>
<rect x="572.9" y="681.5" width="4.2" height="4.2" fill="#e83030" stroke="#555" stroke-width="0.6"/>
<rect x="584.9" y="680.6" width="4.2" height="4.2" fill="#e83030" stroke="#555" stroke-width="0.6"/>
<rect x="596.9" y="679.6999999999999" width="4.2" height="4.2" fill="#e83030" stroke="#555" stroke-width="0.6"/>
<rect x="614.9" y="679.6999999999999" width="4.2" height="4.2" fill="#e83030" stroke="#555" stroke-width="0.6"/>
<rect x="639.1999999999999" y="675.9" width="4.2" height="4.2" fill="#e83030" stroke="#555" stroke-width="0.6"/>
<rect x="663.3" y="674.65" width="4.2" height="4.2" fill="#e83030" stroke="#555" stroke-width="0.6"/>
<rect x="687.3" y="672.15" width="4.2" height="4.2" fill="#e83030" stroke="#555" stroke-width="0.6"/>
<rect x="711.3" y="670.15" width="4.2" height="4.2" fill="#e83030" stroke="#555" stroke-width="0.6"/>
<rect x="753.4" y="665.9" width="4.2" height="4.2" fill="#e83030" stroke="#555" stroke-width="0.6"/>
<rect x="813.6999999999999" y="662.5" width="4.2" height="4.2" fill="#e83030" stroke="#555" stroke-width="0.6"/>
<rect x="873.6" y="658.4" width="4.2" height="4.2" fill="#e83030" stroke="#555" stroke-width="0.6"/>
<rect x="933.9" y="655.8" width="4.2" height="4.2" fill="#e83030" stroke="#555" stroke-width="0.6"/>
<rect x="1024.1000000000001" y="651.0" width="4.2" height="4.2" fill="#e83030" stroke="#555" stroke-width="0.6"/>
<rect x="1145.0" y="646.65" width="4.2" height="4.2" fill="#e83030" stroke="#555" stroke-width="0.6"/>
<rect x="1265.1000000000001" y="643.9" width="4.2" height="4.2" fill="#e83030" stroke="#555" stroke-width="0.6"/>
<circle cx="551" cy="708" r="2.1" fill="#e83030" stroke="#555" stroke-width="0.5"/>
<circle cx="563" cy="684.1" r="2.1" fill="#e83030" stroke="#555" stroke-width="0.5"/>
<circle cx="575" cy="679" r="2.1" fill="#e83030" stroke="#555" stroke-width="0.5"/>
<circle cx="587" cy="676.5" r="2.1" fill="#e83030" stroke="#555" stroke-width="0.5"/>
<circle cx="599" cy="673.9" r="2.1" fill="#e83030" stroke="#555" stroke-width="0.5"/>
<circle cx="617" cy="671.4" r="2.1" fill="#e83030" stroke="#555" stroke-width="0.5"/>
<circle cx="641.3" cy="668.75" r="2.1" fill="#e83030" stroke="#555" stroke-width="0.5"/>
<circle cx="665.4" cy="664.75" r="2.1" fill="#e83030" stroke="#555" stroke-width="0.5"/>
<circle cx="689.4" cy="661" r="2.1" fill="#e83030" stroke="#555" stroke-width="0.5"/>
<circle cx="713.4" cy="656.5" r="2.1" fill="#e83030" stroke="#555" stroke-width="0.5"/>
<circle cx="755.5" cy="650" r="2.1" fill="#e83030" stroke="#555" stroke-width="0.5"/>
<circle cx="815.8" cy="640" r="2.1" fill="#e83030" stroke="#555" stroke-width="0.5"/>
<circle cx="875.7" cy="629.75" r="2.1" fill="#e83030" stroke="#555" stroke-width="0.5"/>
<circle cx="936" cy="620.4" r="2.1" fill="#e83030" stroke="#555" stroke-width="0.5"/>
<circle cx="1026.2" cy="607.75" r="2.1" fill="#e83030" stroke="#555" stroke-width="0.5"/>
<circle cx="1147.1" cy="596.25" r="2.1" fill="#e83030" stroke="#555" stroke-width="0.5"/>
<circle cx="1267.2" cy="588" r="2.1" fill="#e83030" stroke="#555" stroke-width="0.5"/>
<circle cx="551" cy="674.6" r="2.1" fill="#f020f0" stroke="#555" stroke-width="0.5"/>
<circle cx="563" cy="639.6" r="2.1" fill="#f020f0" stroke="#555" stroke-width="0.5"/>
<circle cx="575" cy="635.4" r="2.1" fill="#f020f0" stroke="#555" stroke-width="0.5"/>
<circle cx="587" cy="637.3" r="2.1" fill="#f020f0" stroke="#555" stroke-width="0.5"/>
<circle cx="599" cy="641.2" r="2.1" fill="#f020f0" stroke="#555" stroke-width="0.5"/>
<circle cx="617" cy="635.4" r="2.1" fill="#f020f0" stroke="#555" stroke-width="0.5"/>
<circle cx="641.3" cy="630.5" r="2.1" fill="#f020f0" stroke="#555" stroke-width="0.5"/>
<circle cx="665.4" cy="625.5" r="2.1" fill="#f020f0" stroke="#555" stroke-width="0.5"/>
<circle cx="689.4" cy="621.75" r="2.1" fill="#f020f0" stroke="#555" stroke-width="0.5"/>
<circle cx="713.4" cy="617.75" r="2.1" fill="#f020f0" stroke="#555" stroke-width="0.5"/>
<circle cx="755.5" cy="613.25" r="2.1" fill="#f020f0" stroke="#555" stroke-width="0.5"/>
<circle cx="815.8" cy="612" r="2.1" fill="#f020f0" stroke="#555" stroke-width="0.5"/>
<circle cx="875.7" cy="604.5" r="2.1" fill="#f020f0" stroke="#555" stroke-width="0.5"/>
<circle cx="936" cy="602" r="2.1" fill="#f020f0" stroke="#555" stroke-width="0.5"/>
<circle cx="1026.2" cy="596.25" r="2.1" fill="#f020f0" stroke="#555" stroke-width="0.5"/>
<circle cx="1147.1" cy="588.75" r="2.1" fill="#f020f0" stroke="#555" stroke-width="0.5"/>
<circle cx="1267.2" cy="586.75" r="2.1" fill="#f020f0" stroke="#555" stroke-width="0.5"/>
<rect x="548.9" y="671.4" width="4.2" height="4.2" fill="#f020f0" stroke="#555" stroke-width="0.6"/>
<rect x="560.9" y="635.1999999999999" width="4.2" height="4.2" fill="#f020f0" stroke="#555" stroke-width="0.6"/>
<rect x="572.9" y="634.0" width="4.2" height="4.2" fill="#f020f0" stroke="#555" stroke-width="0.6"/>
<rect x="584.9" y="631.6999999999999" width="4.2" height="4.2" fill="#f020f0" stroke="#555" stroke-width="0.6"/>
<rect x="596.9" y="633.3" width="4.2" height="4.2" fill="#f020f0" stroke="#555" stroke-width="0.6"/>
<rect x="614.9" y="625.3" width="4.2" height="4.2" fill="#f020f0" stroke="#555" stroke-width="0.6"/>
<rect x="639.1999999999999" y="619.65" width="4.2" height="4.2" fill="#f020f0" stroke="#555" stroke-width="0.6"/>
<rect x="663.3" y="613.15" width="4.2" height="4.2" fill="#f020f0" stroke="#555" stroke-width="0.6"/>
<rect x="687.3" y="607.4" width="4.2" height="4.2" fill="#f020f0" stroke="#555" stroke-width="0.6"/>
<rect x="711.3" y="604.4" width="4.2" height="4.2" fill="#f020f0" stroke="#555" stroke-width="0.6"/>
<rect x="753.4" y="596.15" width="4.2" height="4.2" fill="#f020f0" stroke="#555" stroke-width="0.6"/>
<rect x="813.6999999999999" y="589.9" width="4.2" height="4.2" fill="#f020f0" stroke="#555" stroke-width="0.6"/>
<rect x="873.6" y="581.65" width="4.2" height="4.2" fill="#f020f0" stroke="#555" stroke-width="0.6"/>
<rect x="933.9" y="577.65" width="4.2" height="4.2" fill="#f020f0" stroke="#555" stroke-width="0.6"/>
<rect x="1024.1000000000001" y="571.65" width="4.2" height="4.2" fill="#f020f0" stroke="#555" stroke-width="0.6"/>
<rect x="1145.0" y="561.9" width="4.2" height="4.2" fill="#f020f0" stroke="#555" stroke-width="0.6"/>
<rect x="1265.1000000000001" y="558.15" width="4.2" height="4.2" fill="#f020f0" stroke="#555" stroke-width="0.6"/>
<rect x="548.9" y="694.9" width="4.2" height="4.2" fill="#e83030" stroke="#555" stroke-width="0.6"/>
<rect x="560.9" y="665.1" width="4.2" height="4.2" fill="#e83030" stroke="#555" stroke-width="0.6"/>
<rect x="572.9" y="661.1999999999999" width="4.2" height="4.2" fill="#e83030" stroke="#555" stroke-width="0.6"/>
<rect x="584.9" y="656.9" width="4.2" height="4.2" fill="#e83030" stroke="#555" stroke-width="0.6"/>
<rect x="596.9" y="651.3" width="4.2" height="4.2" fill="#e83030" stroke="#555" stroke-width="0.6"/>
<rect x="614.9" y="644.1999999999999" width="4.2" height="4.2" fill="#e83030" stroke="#555" stroke-width="0.6"/>
<rect x="639.1999999999999" y="635.4" width="4.2" height="4.2" fill="#e83030" stroke="#555" stroke-width="0.6"/>
<rect x="663.3" y="628.4" width="4.2" height="4.2" fill="#e83030" stroke="#555" stroke-width="0.6"/>
<rect x="687.3" y="621.65" width="4.2" height="4.2" fill="#e83030" stroke="#555" stroke-width="0.6"/>
<rect x="711.3" y="617.15" width="4.2" height="4.2" fill="#e83030" stroke="#555" stroke-width="0.6"/>
<rect x="753.4" y="606.9" width="4.2" height="4.2" fill="#e83030" stroke="#555" stroke-width="0.6"/>
<rect x="813.6999999999999" y="594.15" width="4.2" height="4.2" fill="#e83030" stroke="#555" stroke-width="0.6"/>
<rect x="873.6" y="581.9" width="4.2" height="4.2" fill="#e83030" stroke="#555" stroke-width="0.6"/>
<rect x="933.9" y="573.9" width="4.2" height="4.2" fill="#e83030" stroke="#555" stroke-width="0.6"/>
<rect x="1024.1000000000001" y="561.15" width="4.2" height="4.2" fill="#e83030" stroke="#555" stroke-width="0.6"/>
<rect x="1145.0" y="550.4" width="4.2" height="4.2" fill="#e83030" stroke="#555" stroke-width="0.6"/>
<rect x="1265.1000000000001" y="544.15" width="4.2" height="4.2" fill="#e83030" stroke="#555" stroke-width="0.6"/>
<rect x="548.9" y="637.1" width="4.2" height="4.2" fill="#70e050" stroke="#555" stroke-width="0.6"/>
<rect x="560.9" y="558.9" width="4.2" height="4.2" fill="#70e050" stroke="#555" stroke-width="0.6"/>
<rect x="572.9" y="586.6" width="4.2" height="4.2" fill="#70e050" stroke="#555" stroke-width="0.6"/>
<rect x="584.9" y="603.8" width="4.2" height="4.2" fill="#70e050" stroke="#555" stroke-width="0.6"/>
<rect x="596.9" y="617.0" width="4.2" height="4.2" fill="#70e050" stroke="#555" stroke-width="0.6"/>
<rect x="614.9" y="630.6" width="4.2" height="4.2" fill="#70e050" stroke="#555" stroke-width="0.6"/>
<rect x="639.1999999999999" y="641.6" width="4.2" height="4.2" fill="#70e050" stroke="#555" stroke-width="0.6"/>
<rect x="663.3" y="649.15" width="4.2" height="4.2" fill="#70e050" stroke="#555" stroke-width="0.6"/>
<rect x="687.3" y="654.9" width="4.2" height="4.2" fill="#70e050" stroke="#555" stroke-width="0.6"/>
<rect x="711.3" y="659.65" width="4.2" height="4.2" fill="#70e050" stroke="#555" stroke-width="0.6"/>
<rect x="753.4" y="665.9" width="4.2" height="4.2" fill="#70e050" stroke="#555" stroke-width="0.6"/>
<rect x="813.6999999999999" y="672.15" width="4.2" height="4.2" fill="#70e050" stroke="#555" stroke-width="0.6"/>
<rect x="873.6" y="676.4" width="4.2" height="4.2" fill="#70e050" stroke="#555" stroke-width="0.6"/>
<rect x="933.9" y="680.1" width="4.2" height="4.2" fill="#70e050" stroke="#555" stroke-width="0.6"/>
<rect x="1024.1000000000001" y="684.65" width="4.2" height="4.2" fill="#70e050" stroke="#555" stroke-width="0.6"/>
<rect x="1145.0" y="689.5" width="4.2" height="4.2" fill="#70e050" stroke="#555" stroke-width="0.6"/>
<rect x="1265.1000000000001" y="691.8" width="4.2" height="4.2" fill="#70e050" stroke="#555" stroke-width="0.6"/>
<rect x="548.9" y="616.9" width="4.2" height="4.2" fill="#4a4a90" stroke="#555" stroke-width="0.6"/>
<rect x="560.9" y="494.0" width="4.2" height="4.2" fill="#4a4a90" stroke="#555" stroke-width="0.6"/>
<rect x="572.9" y="426.5" width="4.2" height="4.2" fill="#4a4a90" stroke="#555" stroke-width="0.6"/>
<rect x="584.9" y="455.0" width="4.2" height="4.2" fill="#4a4a90" stroke="#555" stroke-width="0.6"/>
<rect x="596.9" y="490.2" width="4.2" height="4.2" fill="#4a4a90" stroke="#555" stroke-width="0.6"/>
<rect x="614.9" y="516.9" width="4.2" height="4.2" fill="#4a4a90" stroke="#555" stroke-width="0.6"/>
<rect x="639.1999999999999" y="540.4" width="4.2" height="4.2" fill="#4a4a90" stroke="#555" stroke-width="0.6"/>
<rect x="663.3" y="551.1999999999999" width="4.2" height="4.2" fill="#4a4a90" stroke="#555" stroke-width="0.6"/>
<rect x="687.3" y="558.65" width="4.2" height="4.2" fill="#4a4a90" stroke="#555" stroke-width="0.6"/>
<rect x="711.3" y="561.4" width="4.2" height="4.2" fill="#4a4a90" stroke="#555" stroke-width="0.6"/>
<rect x="753.4" y="565.65" width="4.2" height="4.2" fill="#4a4a90" stroke="#555" stroke-width="0.6"/>
<rect x="813.6999999999999" y="570.15" width="4.2" height="4.2" fill="#4a4a90" stroke="#555" stroke-width="0.6"/>
<rect x="873.6" y="572.15" width="4.2" height="4.2" fill="#4a4a90" stroke="#555" stroke-width="0.6"/>
<rect x="933.9" y="573.4" width="4.2" height="4.2" fill="#4a4a90" stroke="#555" stroke-width="0.6"/>
<rect x="1024.1000000000001" y="574.4" width="4.2" height="4.2" fill="#4a4a90" stroke="#555" stroke-width="0.6"/>
<rect x="1145.0" y="583.65" width="4.2" height="4.2" fill="#4a4a90" stroke="#555" stroke-width="0.6"/>
<rect x="1265.1000000000001" y="591.15" width="4.2" height="4.2" fill="#4a4a90" stroke="#555" stroke-width="0.6"/>
<circle cx="551" cy="601" r="2.1" fill="#4a4a90" stroke="#555" stroke-width="0.5"/>
<circle cx="563" cy="469.2" r="2.1" fill="#4a4a90" stroke="#555" stroke-width="0.5"/>
<circle cx="575" cy="405" r="2.1" fill="#4a4a90" stroke="#555" stroke-width="0.5"/>
<circle cx="587" cy="433.5" r="2.1" fill="#4a4a90" stroke="#555" stroke-width="0.5"/>
<circle cx="599" cy="474" r="2.1" fill="#4a4a90" stroke="#555" stroke-width="0.5"/>
<circle cx="617" cy="506.3" r="2.1" fill="#4a4a90" stroke="#555" stroke-width="0.5"/>
<circle cx="641.3" cy="530" r="2.1" fill="#4a4a90" stroke="#555" stroke-width="0.5"/>
<circle cx="665.4" cy="541.3" r="2.1" fill="#4a4a90" stroke="#555" stroke-width="0.5"/>
<circle cx="689.4" cy="549.5" r="2.1" fill="#4a4a90" stroke="#555" stroke-width="0.5"/>
<circle cx="713.4" cy="553.75" r="2.1" fill="#4a4a90" stroke="#555" stroke-width="0.5"/>
<circle cx="755.5" cy="559.5" r="2.1" fill="#4a4a90" stroke="#555" stroke-width="0.5"/>
<circle cx="815.8" cy="566" r="2.1" fill="#4a4a90" stroke="#555" stroke-width="0.5"/>
<circle cx="875.7" cy="567.75" r="2.1" fill="#4a4a90" stroke="#555" stroke-width="0.5"/>
<circle cx="936" cy="569" r="2.1" fill="#4a4a90" stroke="#555" stroke-width="0.5"/>
<circle cx="1026.2" cy="571.6" r="2.1" fill="#4a4a90" stroke="#555" stroke-width="0.5"/>
<circle cx="1147.1" cy="581.25" r="2.1" fill="#4a4a90" stroke="#555" stroke-width="0.5"/>
<circle cx="1267.2" cy="592.5" r="2.1" fill="#4a4a90" stroke="#555" stroke-width="0.5"/>
</svg>
</body></html>
